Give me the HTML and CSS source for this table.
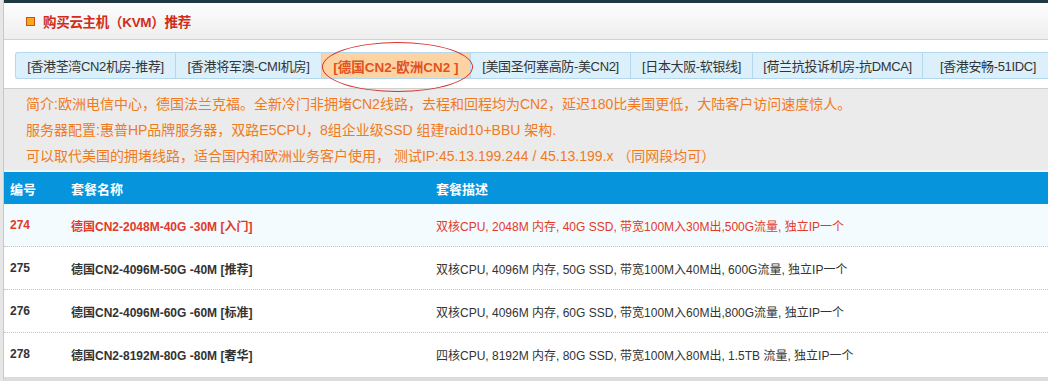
FILE: index.html
```html
<!DOCTYPE html>
<html>
<head>
<meta charset="utf-8">
<link rel="stylesheet" href="styles.css">
</head>
<body>
<div class="page">
  <div class="topline"></div>
  <div class="head">
    <span class="head-icon"></span>
    <span class="head-title">购买云主机（KVM）推荐</span>
  </div>
  <div class="tabs-wrap">
    <div class="tabs">
      <div class="tab t1">[香港荃湾CN2机房-推荐]</div>
      <div class="tab t2">[香港将军澳-CMI机房]</div>
      <div class="tab t3 active">[德国CN2-欧洲CN2 ]<span class="circle"></span></div>
      <div class="tab t4">[美国圣何塞高防-美CN2]</div>
      <div class="tab t5">[日本大阪-软银线]</div>
      <div class="tab t6">[荷兰抗投诉机房-抗DMCA]</div>
      <div class="tab t7">[香港安畅-51IDC]</div>
    </div>
  </div>
  <div class="info">
    <p>简介:欧洲电信中心，德国法兰克福。全新冷门非拥堵CN2线路，去程和回程均为CN2，延迟180比美国更低，大陆客户访问速度惊人。</p>
    <p>服务器配置:惠普HP品牌服务器，双路E5CPU，8组企业级SSD 组建raid10+BBU 架构.</p>
    <p>可以取代美国的拥堵线路，适合国内和欧洲业务客户使用， 测试IP:45.13.199.244 / 45.13.199.x （同网段均可）</p>
  </div>
  <div class="table">
    <div class="row th">
      <div class="c-id">编号</div>
      <div class="c-name">套餐名称</div>
      <div class="c-desc">套餐描述</div>
    </div>
    <div class="row hot">
      <div class="c-id">274</div>
      <div class="c-name">德国CN2-2048M-40G -30M [入门]</div>
      <div class="c-desc">双核CPU, 2048M 内存, 40G SSD, 带宽100M入30M出,500G流量, 独立IP一个</div>
    </div>
    <div class="row">
      <div class="c-id">275</div>
      <div class="c-name">德国CN2-4096M-50G -40M [推荐]</div>
      <div class="c-desc">双核CPU, 4096M 内存, 50G SSD, 带宽100M入40M出, 600G流量, 独立IP一个</div>
    </div>
    <div class="row">
      <div class="c-id">276</div>
      <div class="c-name">德国CN2-4096M-60G -60M [标准]</div>
      <div class="c-desc">双核CPU, 4096M 内存, 60G SSD, 带宽100M入60M出,800G流量, 独立IP一个</div>
    </div>
    <div class="row last">
      <div class="c-id">278</div>
      <div class="c-name">德国CN2-8192M-80G -80M [奢华]</div>
      <div class="c-desc">四核CPU, 8192M 内存, 80G SSD, 带宽100M入80M出, 1.5TB 流量, 独立IP一个</div>
    </div>
  </div>
</div>
</body>
</html>
```
FILE: styles.css
```css
html, body {
  margin: 0;
  padding: 0;
  background: #e6e6e6;
  font-family: "Liberation Sans", "Noto Sans CJK SC", sans-serif;
  overflow: hidden;
}
.page {
  margin-left: 3px;
  border-left: 1px solid #c8c8c8;
  background: #fff;
  height: 377px;
  border-bottom: 4px solid #dcdcdc;
}
.topline {
  height: 3px;
  background: #1f3842;
}
.head {
  height: 37px;
  background: linear-gradient(#fdfdfd, #eeeeee);
  border-bottom: 1px solid #d2d2d2;
  display: flex;
  align-items: center;
  padding-left: 22px;
  box-sizing: border-box;
}
.head-icon {
  width: 7px;
  height: 7px;
  background: #f6a81c;
  border: 1px solid #c9501c;
  margin-right: 8px;
  margin-top: 1px;
}
.head-title {
  color: #cf2d1a;
  font-weight: bold;
  font-size: 13.5px;
  letter-spacing: -0.3px;
}
.tabs-wrap {
  padding: 12px 0 9px 11px;
  border-bottom: 1px solid #cfcfcf;
}
.tabs {
  display: flex;
  height: 27px;
  background: #dcf0fb;
  border: 1px solid #b4d9ef;
  border-right: none;
  border-radius: 3px 0 0 3px;
  box-sizing: border-box;
}
.tab {
  position: relative;
  flex: none;
  display: flex;
  align-items: center;
  justify-content: center;
  font-size: 13px;
  color: #333;
  border-right: 1px solid #b4d9ef;
  white-space: nowrap;
  box-sizing: border-box;
  letter-spacing: -0.35px;
}
.t1 { width: 160px; }
.t2 { width: 146px; }
.t3 { width: 149px; }
.t4 { width: 160px; }
.t5 { width: 122px; }
.t6 { width: 170px; }
.t7 { width: 130px; border-right: none; }
.tab.active {
  background: #fdd3a4;
  color: #e2521e;
  font-weight: bold;
  font-size: 13.5px;
  letter-spacing: 0;
}
.circle {
  position: absolute;
  left: 0;
  top: -11px;
  width: 151px;
  height: 50px;
  border: 1px solid #d8332c;
  border-radius: 50%;
  box-sizing: border-box;
}
.info {
  background: #ebebeb;
  padding: 2px 0 1px 22px;
  border-bottom: 2px solid #f4f4f4;
}
.info p {
  margin: 0;
  font-size: 14px;
  line-height: 26px;
  color: #f07a22;
  white-space: nowrap;
}
.table {
  font-size: 12px;
}
.row {
  display: flex;
  align-items: center;
  height: 43px;
  border-bottom: 1px dotted #bfc6ca;
  box-sizing: border-box;
  color: #333;
}
.row.last { border-bottom: none; height: 42px; }
.row.th {
  background: #0695dc;
  color: #fff;
  font-weight: bold;
  font-size: 13px;
  height: 32px;
  border-bottom: none;
}
.row.hot {
  background: #f3fbfe;
  color: #e23a29;
}
.c-id {
  width: 61px;
  padding-left: 6px;
  font-weight: bold;
}
.c-name {
  width: 365px;
  font-weight: bold;
}
.c-desc {
  white-space: nowrap;
}
```
